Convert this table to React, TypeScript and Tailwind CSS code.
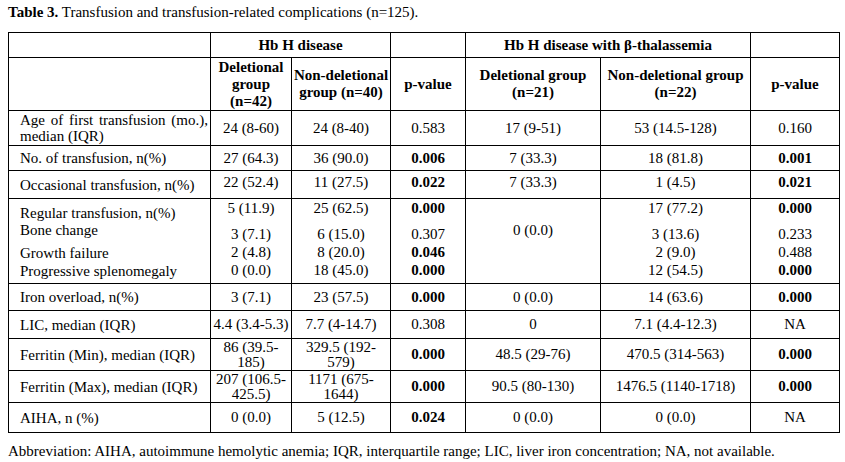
const serif = { fontFamily: '"Liberation Serif", "Times New Roman", serif' };

type Cell = { v: React.ReactNode; b?: boolean };

const rows: { label: React.ReactNode; h: string; cells: Cell[] }[] = [
  {
    label: (
      <span className="block text-justify [text-align-last:left]">
        Age of first transfusion (mo.), median (IQR)
      </span>
    ),
    h: 'h-[35px]',
    cells: [
      { v: '24 (8-60)' },
      { v: '24 (8-40)' },
      { v: '0.583' },
      { v: '17 (9-51)' },
      { v: '53 (14.5-128)' },
      { v: '0.160' },
    ],
  },
  {
    label: 'No. of transfusion, n(%)',
    h: 'h-[25px]',
    cells: [
      { v: '27 (64.3)' },
      { v: '36 (90.0)' },
      { v: '0.006', b: true },
      { v: '7 (33.3)' },
      { v: '18 (81.8)' },
      { v: '0.001', b: true },
    ],
  },
];

const rowsAfter: { label: React.ReactNode; h: string; cells: Cell[] }[] = [
  {
    label: 'Iron overload, n(%)',
    h: 'h-[27px]',
    cells: [
      { v: '3 (7.1)' },
      { v: '23 (57.5)' },
      { v: '0.000', b: true },
      { v: '0 (0.0)' },
      { v: '14 (63.6)' },
      { v: '0.000', b: true },
    ],
  },
  {
    label: 'LIC, median (IQR)',
    h: 'h-[28px]',
    cells: [
      { v: '4.4 (3.4-5.3)' },
      { v: '7.7 (4-14.7)' },
      { v: '0.308' },
      { v: '0' },
      { v: '7.1 (4.4-12.3)' },
      { v: 'NA' },
    ],
  },
  {
    label: 'Ferritin (Min), median (IQR)',
    h: 'h-[32px]',
    cells: [
      { v: <>86 (39.5-<br />185)</> },
      { v: <>329.5 (192-<br />579)</> },
      { v: '0.000', b: true },
      { v: '48.5 (29-76)' },
      { v: '470.5 (314-563)' },
      { v: '0.000', b: true },
    ],
  },
  {
    label: 'Ferritin (Max), median (IQR)',
    h: 'h-[32px]',
    cells: [
      { v: <>207 (106.5-<br />425.5)</> },
      { v: <>1171 (675-<br />1644)</> },
      { v: '0.000', b: true },
      { v: '90.5 (80-130)' },
      { v: '1476.5 (1140-1718)' },
      { v: '0.000', b: true },
    ],
  },
  {
    label: 'AIHA, n (%)',
    h: 'h-[30px]',
    cells: [
      { v: '0 (0.0)' },
      { v: '5 (12.5)' },
      { v: '0.024', b: true },
      { v: '0 (0.0)' },
      { v: '0 (0.0)' },
      { v: 'NA' },
    ],
  },
];

const td = 'border border-black align-middle text-center p-0 leading-[15px]';
const tdLabel = 'border border-black align-middle text-left pl-[11px] pr-[2px] p-0 leading-[16px]';

function DataRow({ label, h, cells }: { label: React.ReactNode; h: string; cells: Cell[] }) {
  return (
    <tr className={h}>
      <td className={tdLabel}>{label}</td>
      {cells.map((c, i) => (
        <td key={i} className={`${td} ${c.b ? 'font-bold' : ''}`}>
          {c.v}
        </td>
      ))}
    </tr>
  );
}

function Stack({ items }: { items: Cell[] }) {
  // first line on top, then three lines for the sub items
  return (
    <div className="flex flex-col items-center leading-[18px]">
      {items.map((it, i) => (
        <span key={i} className={`${it.b ? 'font-bold' : ''} ${i === 1 ? 'mt-[8px]' : ''}`}>
          {it.v}
        </span>
      ))}
    </div>
  );
}

export default function App() {
  return (
    <div className="w-[845px] h-[462px] bg-white text-black text-[15px] px-[8px] pt-[3px]" style={serif}>
      <p className="leading-[18px] h-[29px]">
        <span className="font-bold">Table 3.</span> Transfusion and transfusion-related complications (n=125).
      </p>

      <table className="table-fixed border-collapse w-[831px]">
        <colgroup>
          <col className="w-[202px]" />
          <col className="w-[81px]" />
          <col className="w-[99px]" />
          <col className="w-[75px]" />
          <col className="w-[135px]" />
          <col className="w-[150px]" />
          <col className="w-[89px]" />
        </colgroup>
        <thead>
          <tr className="h-[25px] font-bold">
            <td className={td}></td>
            <td colSpan={2} className={td}>Hb H disease</td>
            <td className={td}></td>
            <td colSpan={2} className={td}>Hb H disease with β-thalassemia</td>
            <td className={td}></td>
          </tr>
          <tr className="h-[53px] font-bold leading-[17px]">
            <td className={td}></td>
            <td className={`${td} leading-[17px]`}>
              Deletional
              <br />
              group
              <br />
              (n=42)
            </td>
            <td className={`${td} leading-[17px]`}>
              Non-deletional
              <br />
              group (n=40)
            </td>
            <td className={td}>p-value</td>
            <td className={`${td} leading-[17px]`}>
              Deletional group
              <br />
              (n=21)
            </td>
            <td className={`${td} leading-[17px]`}>
              Non-deletional group
              <br />
              (n=22)
            </td>
            <td className={td}>p-value</td>
          </tr>
        </thead>
        <tbody>
          {rows.map((r, i) => (
            <DataRow key={i} {...r} />
          ))}
          <tr className="h-[28px]">
            <td className={tdLabel}>Occasional transfusion, n(%)</td>
            <td className={`${td} align-top pt-[4px]`}>22 (52.4)</td>
            <td className={`${td} align-top pt-[4px]`}>11 (27.5)</td>
            <td className={`${td} align-top pt-[4px] font-bold`}>0.022</td>
            <td className={`${td} align-top pt-[4px]`}>7 (33.3)</td>
            <td className={`${td} align-top pt-[4px]`}>1 (4.5)</td>
            <td className={`${td} align-top pt-[4px] font-bold`}>0.021</td>
          </tr>
          <tr className="h-[85px]">
            <td className="border border-black align-top text-left pl-[11px] pt-[6px]">
              <div className="flex flex-col leading-[17px]">
                <span>Regular transfusion, n(%)</span>
                <span>Bone change</span>
                <span className="mt-[5px] leading-[18px]">Growth failure</span>
                <span className="leading-[18px]">Progressive splenomegaly</span>
              </div>
            </td>
            <td className={`${td} align-top`}>
              <Stack items={[{ v: '5 (11.9)' }, { v: '3 (7.1)' }, { v: '2 (4.8)' }, { v: '0 (0.0)' }]} />
            </td>
            <td className={`${td} align-top`}>
              <Stack items={[{ v: '25 (62.5)' }, { v: '6 (15.0)' }, { v: '8 (20.0)' }, { v: '18 (45.0)' }]} />
            </td>
            <td className={`${td} align-top`}>
              <Stack
                items={[
                  { v: '0.000', b: true },
                  { v: '0.307' },
                  { v: '0.046', b: true },
                  { v: '0.000', b: true },
                ]}
              />
            </td>
            <td className={`${td} align-top`}>
              <div className="leading-[18px] pt-[22px]">0 (0.0)</div>
            </td>
            <td className={`${td} align-top`}>
              <Stack items={[{ v: '17 (77.2)' }, { v: '3 (13.6)' }, { v: '2 (9.0)' }, { v: '12 (54.5)' }]} />
            </td>
            <td className={`${td} align-top`}>
              <Stack
                items={[
                  { v: '0.000', b: true },
                  { v: '0.233' },
                  { v: '0.488' },
                  { v: '0.000', b: true },
                ]}
              />
            </td>
          </tr>
          {rowsAfter.map((r, i) => (
            <DataRow key={i} {...r} />
          ))}
        </tbody>
      </table>

      <p className="leading-[18px] mt-[9px]">
        Abbreviation: AIHA, autoimmune hemolytic anemia; IQR, interquartile range; LIC, liver iron concentration; NA,
        not available.
      </p>
    </div>
  );
}
